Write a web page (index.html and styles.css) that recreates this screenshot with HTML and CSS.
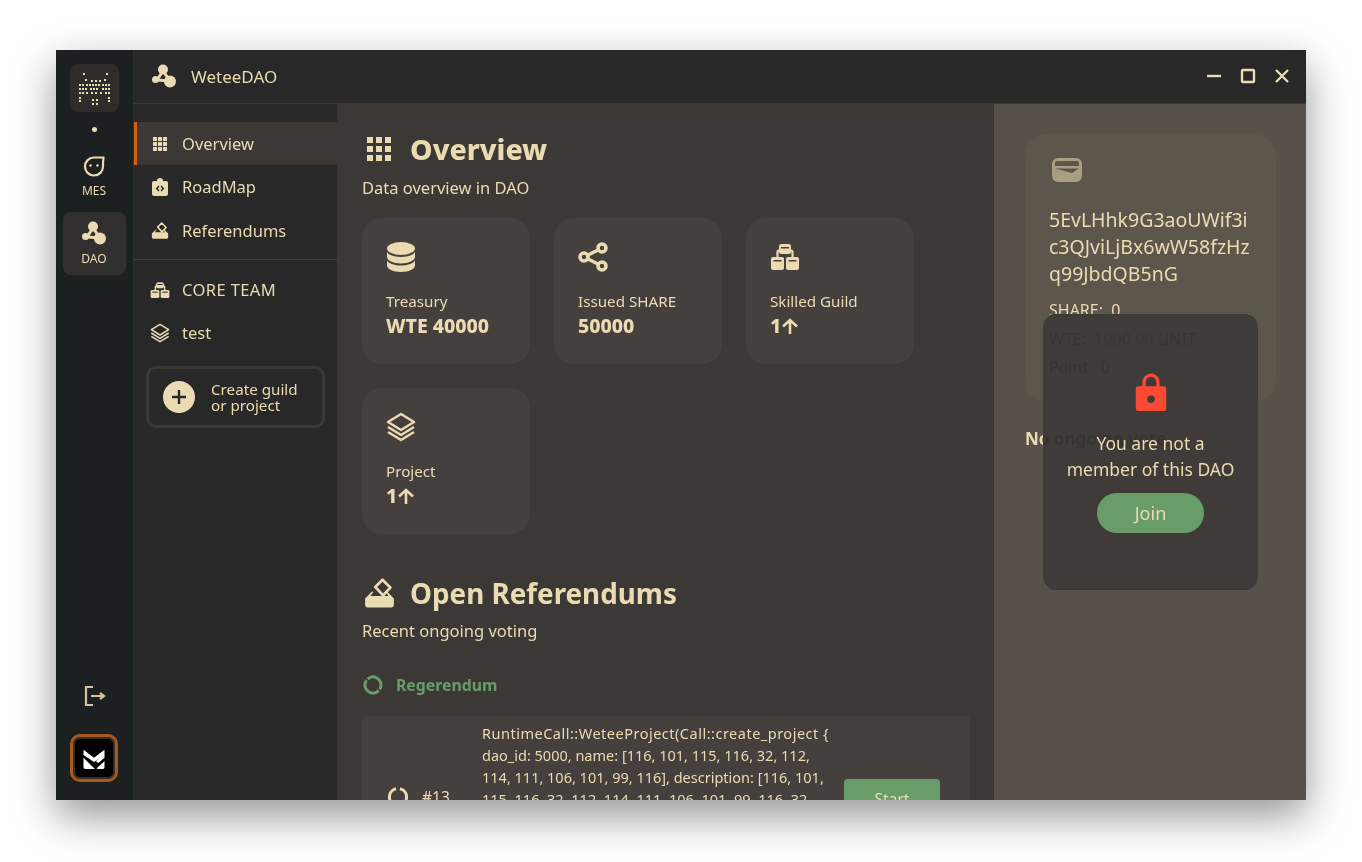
FILE: index.html
```html
<!DOCTYPE html>
<html lang="en">
<head>
    <meta charset="UTF-8">
    <title>WeteeDAO</title>
    <link rel="stylesheet" href="styles.css">
</head>
<body>
    <div class="window">
        <aside class="rail">
            <div class="rail-logo">
                <svg width="33" height="33" viewBox="0 0 33 33" fill="#ebdbb2">
                    <path d="M5 1h2v2H5zM28 1h2v2h-2zM7 7h2v2H7zM13 8h2v2h-2zM17 8h2v2h-2zM21 8h2v2h-2zM26 7h2v2h-2zM1 12h2v2H1zM4 12h2v2H4zM8 12h2v2H8zM11 12h2v2h-2zM14 12h2v2h-2zM17 12h2v2h-2zM20 12h2v2h-2zM24 12h2v2h-2zM27 12h2v2h-2zM30 12h2v2h-2zM1 16h2v2H1zM4 16h2v2H4zM7 16h2v2H7zM12 16h2v2h-2zM15 16h2v2h-2zM18 16h2v2h-2zM24 16h2v2h-2zM27 16h2v2h-2zM30 16h2v2h-2zM1 20h2v2H1zM4 20h2v2H4zM8 20h2v2H8zM13 20h2v2h-2zM17 20h2v2h-2zM22 20h2v2h-2zM27 20h2v2h-2zM30 20h2v2h-2zM1 25h2v2H1zM30 25h2v2h-2zM1 28h2v2H1zM30 28h2v2h-2zM14 27h2v2h-2zM18 27h2v2h-2zM14 31h2v2h-2zM18 31h2v2h-2z"/>
                </svg>
            </div>
            <span class="rail-dot"></span>
            <a class="rail-item rail-mes">
                <svg width="22" height="22" viewBox="0 0 22 22" fill="none" stroke="#ebdbb2" stroke-width="2.200">
                    <path d="M21.500 2.500H11A9 9 0 1 0 20 11.500C20 8 20 6 20.500 3"/>
                    <circle cx="7.500" cy="10.500" r="1.300" fill="#ebdbb2" stroke="none"/>
                    <circle cx="14.500" cy="10.500" r="1.300" fill="#ebdbb2" stroke="none"/>
                </svg>
                <span>MES</span>
            </a>
            <a class="rail-item rail-active">
                <svg width="24" height="24" viewBox="0 0 24 24"><use href="#dao"/></svg>
                <span>DAO</span>
            </a>
            <div class="rail-bottom">
                <svg class="rail-exit" width="22" height="22" viewBox="0 0 22 22" fill="none" stroke="#d5c4a1" stroke-width="2.200">
                    <path d="M9 2H2v18h7M7 11h12M16 8l4 3-4 3"/>
                </svg>
                <div class="avatar">
                    <svg width="24" height="21" viewBox="0 0 26 24" fill="#fff">
                        <path d="M1 2l12 9 12-9v9l-7 6-3-2 5-4-7 5L1 8zM1 11l13 13H3a2 2 0 0 1-2-2zM25 15v7a2 2 0 0 1-2 2h-6l-1-1z"/>
                    </svg>
                </div>
            </div>
        </aside>

        <div class="frame">
            <header class="titlebar">
                <svg width="24" height="26" viewBox="0 0 24 24"><use href="#dao"/></svg>
                <h1>WeteeDAO</h1>
                <div class="win-btns">
                    <svg width="16" height="16" viewBox="0 0 16 16" stroke="#ebdbb2" stroke-width="2.400" fill="none"><path d="M1 8h14"/></svg>
                    <svg width="16" height="16" viewBox="0 0 16 16" stroke="#ebdbb2" stroke-width="2.400" fill="none"><rect x="2" y="2" width="12" height="12" rx="1"/></svg>
                    <svg width="16" height="16" viewBox="0 0 16 16" stroke="#ebdbb2" stroke-width="2.400" fill="none"><path d="M2 2l12 12M14 2L2 14"/></svg>
                </div>
            </header>

            <div class="columns">
                <nav class="side">
                    <a class="side-item side-active">
                        <svg width="14" height="14" viewBox="0 0 14 14"><use href="#grid"/></svg>
                        Overview
                    </a>
                    <a class="side-item">
                        <svg width="16" height="18" viewBox="0 0 16 18" fill="#ebdbb2">
                            <path fill-rule="evenodd" d="M2 3h3a3 3 0 0 1 6 0h3a2 2 0 0 1 2 2v11a2 2 0 0 1-2 2H2a2 2 0 0 1-2-2V5a2 2 0 0 1 2-2zm4.500 4.500L3.700 10.500l2.800 3 1-1-1.800-2 1.800-2zm3 0l-1 1 1.800 2-1.800 2 1 1 2.800-3z"/>
                        </svg>
                        RoadMap
                    </a>
                    <a class="side-item">
                        <svg width="16" height="17" viewBox="0 0 24 25"><use href="#vote"/></svg>
                        Referendums
                    </a>
                    <hr class="side-line">
                    <a class="side-item">
                        <svg width="18" height="16" viewBox="0 0 28 24"><use href="#org"/></svg>
                        <span class="team">CORE TEAM</span>
                    </a>
                    <a class="side-item">
                        <svg width="20" height="20" viewBox="0 0 30 30"><use href="#stack"/></svg>
                        test
                    </a>
                    <a class="create-btn">
                        <svg width="32" height="32" viewBox="0 0 32 32">
                            <circle cx="16" cy="16" r="16" fill="#ebdbb2"/>
                            <path d="M16 9v14M9 16h14" stroke="#282828" stroke-width="2.400"/>
                        </svg>
                        <span>Create guild<br>or project</span>
                    </a>
                </nav>

                <main class="content">
                    <div class="heading">
                        <svg width="26" height="26" viewBox="0 0 26 26"><use href="#grid-big"/></svg>
                        <h2>Overview</h2>
                    </div>
                    <p class="sub">Data overview in DAO</p>

                    <div class="stats">
                        <div class="stat">
                            <svg width="30" height="30" viewBox="0 0 30 30" fill="#ebdbb2">
                                <ellipse cx="15" cy="6.500" rx="14" ry="6.500"/>
                                <path d="M1 10c2 3.500 8 5 14 5s12-1.500 14-5v5c0 3.600-6.300 6.400-14 6.400S1 18.600 1 15z"/>
                                <path d="M1 18.500c2 3.500 8 5 14 5s12-1.500 14-5v5c0 3.600-6.300 6.500-14 6.500S1 27.100 1 23.500z"/>
                            </svg>
                            <div class="stat-label">Treasury</div>
                            <div class="stat-value">WTE 40000</div>
                        </div>
                        <div class="stat">
                            <svg width="30" height="30" viewBox="0 0 30 30" fill="none" stroke="#ebdbb2" stroke-width="3.600">
                                <circle cx="6" cy="15" r="4"/>
                                <circle cx="24" cy="6" r="4"/>
                                <circle cx="24" cy="24" r="4"/>
                                <path d="M10 13l10-5M10 17l10 5"/>
                            </svg>
                            <div class="stat-label">Issued SHARE</div>
                            <div class="stat-value">50000</div>
                        </div>
                        <div class="stat">
                            <svg width="30" height="30" viewBox="0 0 30 30"><use href="#org-big"/></svg>
                            <div class="stat-label">Skilled Guild</div>
                            <div class="stat-value">1<svg class="up" width="16" height="16" viewBox="0 0 16 16"><use href="#up"/></svg></div>
                        </div>
                        <div class="stat">
                            <svg width="30" height="30" viewBox="0 0 30 30"><use href="#stack"/></svg>
                            <div class="stat-label">Project</div>
                            <div class="stat-value">1<svg class="up" width="16" height="16" viewBox="0 0 16 16"><use href="#up"/></svg></div>
                        </div>
                    </div>

                    <div class="heading heading-ref">
                        <svg width="29" height="30" viewBox="0 0 24 25"><use href="#vote"/></svg>
                        <h2 class="h2-ref">Open Referendums</h2>
                    </div>
                    <p class="sub sub-ref">Recent ongoing voting</p>

                    <div class="ref-title">
                        <svg width="20" height="20" viewBox="0 0 20 20" fill="none" stroke="#689d6a" stroke-width="3">
                            <circle cx="10" cy="10" r="8" stroke-dasharray="13 1.500 24 1.500 9.800 1.500" transform="rotate(-60 10 10)"/>
                        </svg>
                        Regerendum
                    </div>

                    <div class="ref-row">
                        <svg class="ref-ring" width="20" height="20" viewBox="0 0 20 20" fill="none" stroke="#ebdbb2" stroke-width="3">
                            <path d="M8 1.800a8.400 8.400 0 0 0 0 16.400M12 1.800a8.400 8.400 0 0 1 0 16.400"/>
                        </svg>
                        <span class="ref-no">#13</span>
                        <p class="ref-text"><span class="ref-call">RuntimeCall::WeteeProject(Call::create_project {</span><br>dao_id: 5000, name: [116, 101, 115, 116, 32, 112,<br>114, 111, 106, 101, 99, 116], description: [116, 101,<br>115, 116, 32, 112, 114, 111, 106, 101, 99, 116, 32,<br>100, 101, 115, 99, 114, 105, 112, 116, 105, 111, 110],<br>ext: None, ref_index: 0, budget: 0,<br>members: [] })</p>
                        <button class="start-btn">Start</button>
                    </div>
                </main>

                <aside class="panel">
                    <div class="wallet">
                        <svg class="wallet-icon" width="30" height="24" viewBox="0 0 30 24">
                            <path fill-rule="evenodd" d="M6 0h18a6 6 0 0 1 6 6v12a6 6 0 0 1-6 6H6a6 6 0 0 1-6-6V6a6 6 0 0 1 6-6zM3 5v3h24V5a2 2 0 0 0-2-2H5a2 2 0 0 0-2 2zm0 5.500L20 15l7-4.500z" fill="#a89e80"/>
                        </svg>
                        <p class="address">5EvLHhk9G3aoUWif3i<br>c3QJviLjBx6wW58fzHz<br>q99JbdQB5nG</p>
                        <p class="meta">SHARE:&nbsp; 0</p>
                        <p class="meta">WTE:&nbsp; 1000.00 UNIT</p>
                        <p class="meta">Point:&nbsp; 0</p>
                    </div>
                    <p class="no-vote">No ongoing vote</p>

                    <div class="lock-box">
                        <svg width="32" height="40" viewBox="0 0 32 42">
                            <path fill-rule="evenodd" d="M7 14V9.500a9 9 0 0 1 18 0V14h4a3 3 0 0 1 3 3v20a3 3 0 0 1-3 3H3a3 3 0 0 1-3-3V17a3 3 0 0 1 3-3zm3.500 0h11V9.500a5.500 5.500 0 0 0-11 0zM16 23.500a4 4 0 1 0 0 8 4 4 0 0 0 0-8z" fill="#fb4934"/>
                        </svg>
                        <p>You are not a<br>member of this DAO</p>
                        <button class="join-btn">Join</button>
                    </div>
                </aside>
            </div>
        </div>
    </div>

    <svg class="defs" width="0" height="0">
        <defs>
            <g id="dao" fill="#ebdbb2">
                <path d="M11 7L5 16l13 1z" fill="none" stroke="#ebdbb2" stroke-width="3"/>
                <circle cx="11" cy="5.500" r="5"/>
                <circle cx="3.500" cy="15.500" r="3.500"/>
                <circle cx="18" cy="17.500" r="6"/>
            </g>
            <g id="up" fill="none" stroke="#ebdbb2" stroke-width="2.600">
                <path d="M8 16V2M1 8.500L8 2l7 6.500"/>
            </g>
            <g id="grid" fill="#ebdbb2">
                <path d="M0 0h4v4H0zM5 0h4v4H5zM10 0h4v4h-4zM0 5h4v4H0zM5 5h4v4H5zM10 5h4v4h-4zM0 10h4v4H0zM5 10h4v4H5zM10 10h4v4h-4z"/>
            </g>
            <g id="grid-big" fill="#ebdbb2">
                <path d="M1 1h6v6H1zM10 1h6v6h-6zM19 1h6v6h-6zM1 10h6v6H1zM10 10h6v6h-6zM19 10h6v6h-6zM1 19h6v6H1zM10 19h6v6h-6zM19 19h6v6h-6z"/>
            </g>
            <g id="vote" fill="#ebdbb2">
                <path d="M14.500 1.500l6.500 6.500-6 6.500-6.500-7z" fill="none" stroke="#ebdbb2" stroke-width="2.300" stroke-linejoin="round"/>
                <path d="M5.500 11.500L0 17v5.500a2 2 0 0 0 2 2h20a2 2 0 0 0 2-2V17l-5.500-5.500H17L19.500 15h-15L7 11.500z"/>
            </g>
            <g id="org">
                <path d="M7 12V8a2 2 0 0 1 2-2h10a2 2 0 0 1 2 2v4" fill="none" stroke="#ebdbb2" stroke-width="2.200"/>
                <rect x="8.500" y="1" width="11" height="8" rx="2.500" fill="#ebdbb2" stroke="#ebdbb2"/>
                <rect x="10" y="3" width="8" height="1.500" fill="#282828"/>
                <rect x="0" y="12" width="13" height="12" rx="2" fill="#ebdbb2"/>
                <rect x="15" y="12" width="13" height="12" rx="2" fill="#ebdbb2"/>
                <rect x="2.500" y="14.500" width="8" height="1.500" fill="#282828"/>
                <rect x="17.500" y="14.500" width="8" height="1.500" fill="#282828"/>
            </g>
            <g id="org-big">
                <path d="M7.500 15v-5a1.500 1.500 0 0 1 1.500-1.500h12a1.500 1.500 0 0 1 1.500 1.500v5" fill="none" stroke="#ebdbb2" stroke-width="2.200"/>
                <rect x="9" y="2" width="12" height="10" rx="2.500" fill="#ebdbb2"/>
                <rect x="11" y="5" width="8" height="1.500" fill="#45403d"/>
                <rect x="1" y="15" width="13" height="13" rx="2" fill="#ebdbb2"/>
                <rect x="16" y="15" width="13" height="13" rx="2" fill="#ebdbb2"/>
                <rect x="3.500" y="18" width="8" height="1.500" fill="#45403d"/>
                <rect x="18.500" y="18" width="8" height="1.500" fill="#45403d"/>
            </g>
            <g id="stack" fill="none" stroke="#ebdbb2" stroke-width="2.400" stroke-linejoin="round">
                <path d="M15 2l13 8-13 8-13-8z"/>
                <path d="M2 15l13 8 13-8"/>
                <path d="M2 20l13 8 13-8"/>
            </g>
        </defs>
    </svg>
</body>
</html>
```

FILE: styles.css
```css
*{
    box-sizing: border-box;
    padding: 0;
    margin: 0;
}

body{
    font-family: 'Noto Sans', 'Open Sans', sans-serif;
    background-color: #fff;
    color: #ebdbb2;
    height: 862px;
    padding: 50px 56px 0;
    overflow: hidden;
}

.defs{
    position: absolute;
}

.window{
    width: 1250px;
    height: 750px;
    display: flex;
    overflow: hidden;
    background-color: #282828;
    box-shadow: 0 16px 40px rgba(0, 0, 0, .42);
}

/* left rail */
.rail{
    width: 78px;
    flex: none;
    background-color: #1d2021;
    border-right: 1px solid #32302f;
    display: flex;
    flex-direction: column;
    align-items: center;
    padding: 14px 1px 0 0;
}

.rail-logo{
    width: 49px;
    height: 48px;
    border-radius: 8px;
    background-color: #2e2d2b;
    display: flex;
    align-items: center;
    justify-content: center;
}

.rail-dot{
    width: 5px;
    height: 5px;
    border-radius: 50%;
    background-color: #ebdbb2;
    margin: 15px 0 0;
}

.rail-item{
    display: flex;
    flex-direction: column;
    align-items: center;
    justify-content: center;
    width: 63px;
    height: 63px;
    border-radius: 8px;
    font-size: 12px;
    line-height: 16px;
    gap: 6px;
}

.rail-mes{
    margin-top: 14px;
    height: 62px;
}

.rail-active{
    background-color: #32302f;
    margin-top: 4px;
}

.rail-bottom{
    margin-top: auto;
    display: flex;
    flex-direction: column;
    align-items: center;
    gap: 27px;
    padding-bottom: 18px;
}

.rail-exit{
    margin-left: 2px;
}

.avatar{
    width: 48px;
    height: 48px;
    border-radius: 10px;
    background-color: #000;
    border: 3px solid #a9591d;
    box-shadow: inset 0 0 0 2px #32302f;
    display: flex;
    align-items: center;
    justify-content: center;
}

/* title bar */
.frame{
    flex: 1;
    min-width: 0;
    display: flex;
    flex-direction: column;
}

.titlebar{
    height: 54px;
    flex: none;
    display: flex;
    align-items: center;
    padding: 0 16px 1px 18px;
    background-color: #282828;
    border-bottom: 1px solid #3c3836;
}

.titlebar h1{
    font-size: 17px;
    font-weight: 400;
    margin-left: 15px;
}

.win-btns{
    margin-left: auto;
    display: flex;
    gap: 18px;
}

.columns{
    flex: 1;
    min-height: 0;
    display: flex;
}

/* guild and project nav */
.side{
    width: 203px;
    flex: none;
    padding-top: 18px;
    background-color: #282828;
}

.side-item{
    height: 43.300px;
    display: flex;
    align-items: center;
    gap: 12px;
    padding-left: 16px;
    font-size: 16.500px;
}

.side-item svg{
    width: 20px;
    flex: none;
}

.team{
    letter-spacing: .4px;
}

.side-active{
    background-color: #3c3836;
    border-left: 3px solid #d65d0e;
    padding-left: 13px;
}

.side-line{
    border: 0;
    border-top: 1px solid #45403d;
    margin: 7px 0 8px;
}

.create-btn{
    display: flex;
    align-items: center;
    gap: 16px;
    width: 179px;
    height: 62px;
    margin: 12px 0 0 12px;
    padding-left: 14px;
    border: 3px solid #3c3836;
    border-radius: 10px;
    font-size: 15.200px;
    line-height: 16px;
}

/* main column */
.content{
    width: 657px;
    flex: none;
    background-color: #3c3836;
    padding: 28px 24px 0 25px;
    overflow: hidden;
}

.heading{
    display: flex;
    align-items: center;
    gap: 18px;
    padding-left: 4px;
    height: 34px;
}

.heading h2{
    font-size: 28.500px;
    font-weight: 800;
}

.sub{
    font-size: 16.500px;
    margin-top: 11px;
    line-height: 22px;
}

.sub-ref{
    margin-top: 10px;
}

.stats{
    display: flex;
    flex-wrap: wrap;
    gap: 24px;
    margin-top: 19px;
}

.stat{
    width: 168px;
    height: 146px;
    background-color: #45403d;
    border-radius: 20px;
    padding: 24px;
}

.stat > svg{
    display: block;
}

.stat-label{
    font-size: 15.200px;
    margin-top: 18px;
    line-height: 22px;
}

.stat-value{
    display: flex;
    align-items: center;
    font-size: 19.500px;
    font-weight: 800;
    line-height: 28px;
}

.up{
    margin-left: 1px;
}

.heading-ref{
    margin-top: 42px;
    padding-left: 3px;
    gap: 16px;
}

.heading .h2-ref{
    font-size: 27.800px;
    font-weight: 700;
}

.ref-title{
    display: flex;
    align-items: center;
    gap: 13px;
    color: #689d6a;
    font-weight: 700;
    font-size: 15.800px;
    margin-top: 32px;
    padding-left: 1px;
}

.ref-row{
    width: 608px;
    display: flex;
    align-items: center;
    margin-top: 20px;
    padding: 6px 30px 9px 26px;
    border-radius: 5px;
    background-color: #45403d;
}

.ref-ring{
    flex: none;
    margin-bottom: 4px;
}

.ref-no{
    font-size: 15.500px;
    width: 74px;
    padding-left: 14px;
    flex: none;
    margin-bottom: 4px;
}

.ref-text{
    width: 362px;
    flex: none;
    font-size: 14.500px;
    line-height: 22px;
    white-space: nowrap;
}

.ref-call{
    letter-spacing: .5px;
}

.start-btn{
    width: 96px;
    height: 40px;
    margin-left: auto;
    border: 0;
    border-radius: 4px;
    background-color: #689d6a;
    color: #ebdbb2;
    font-family: inherit;
    font-size: 15.500px;
}

/* right column */
.panel{
    flex: 1;
    position: relative;
    background-color: #57514a;
    padding: 30px 30px 30px 31px;
}

.wallet{
    width: 251px;
    height: 268px;
    border-radius: 22px;
    background-color: #5d564d;
    padding: 24px;
}

.wallet-icon{
    display: block;
    margin-left: 3px;
}

.address{
    font-size: 19.500px;
    line-height: 27px;
    margin: 24px 0 9px;
    white-space: nowrap;
}

.meta{
    font-size: 16px;
    line-height: 28.500px;
}

.no-vote{
    font-size: 17px;
    font-weight: 700;
    line-height: 23px;
    margin-top: 25px;
}

/* the backdrop invert turns the text underneath darker than the box */
.lock-box{
    position: absolute;
    left: 49px;
    top: 210px;
    width: 215px;
    height: 276px;
    border-radius: 12px;
    background-color: rgba(58, 53, 50, .95);
    backdrop-filter: invert(1);
    display: flex;
    flex-direction: column;
    align-items: center;
    padding-top: 59px;
    text-align: center;
    font-size: 17.500px;
    line-height: 26px;
}

.lock-box p{
    margin-top: 17px;
}

.join-btn{
    width: 107px;
    height: 40px;
    margin-top: 11px;
    border: 0;
    border-radius: 20px;
    background-color: #689d6a;
    color: #ebdbb2;
    font-family: inherit;
    font-size: 18px;
}
```
